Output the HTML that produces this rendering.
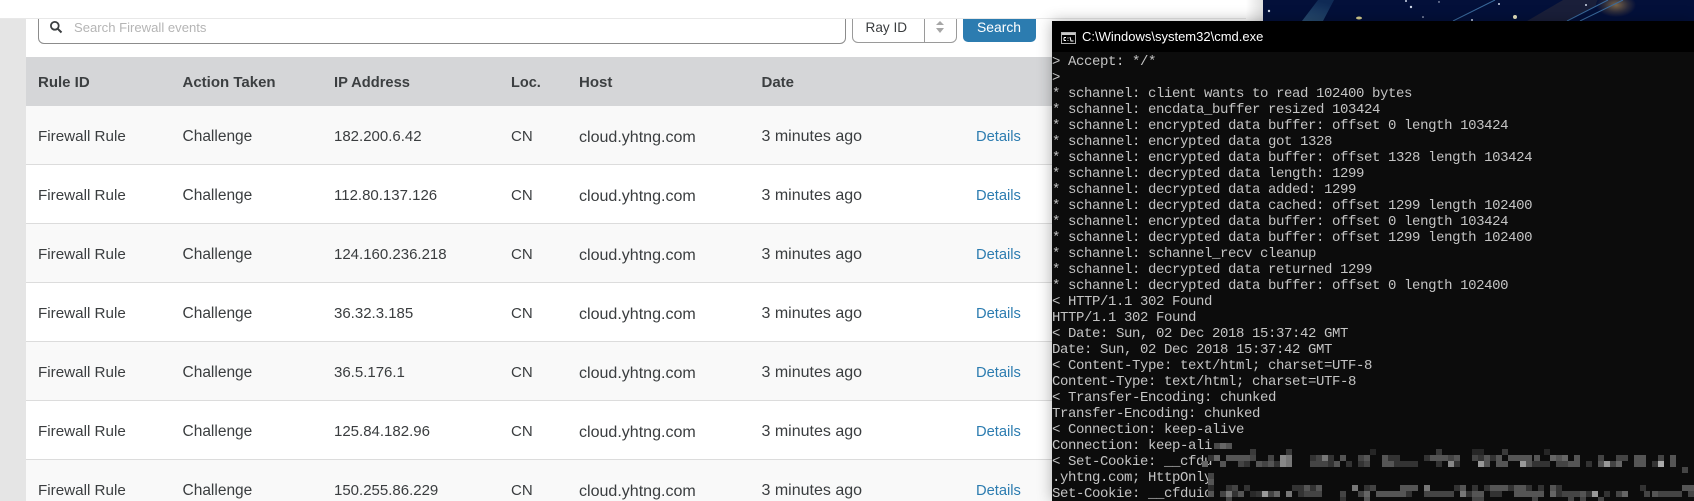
<!DOCTYPE html>
<html><head><meta charset="utf-8"><title>Firewall events</title>
<style>
*{box-sizing:border-box}
html,body{margin:0;padding:0;width:1694px;height:501px;overflow:hidden;background:#fff;font-family:"Liberation Sans",sans-serif;color:#3a3d3f}
#page{position:relative;width:1694px;height:501px;overflow:hidden;background:#fff}
.abs{position:absolute}
#gray{left:0;top:19px;width:26px;height:482px;background:#e5e5e5}
#line{left:0;top:18px;width:1246px;height:1px;background:#e8e8e8}
#fade{left:1246px;top:0;width:17px;height:21px;background:linear-gradient(90deg,#fff,#dedede)}
#sky{left:1263px;top:0}
#clip{left:0;top:19px;width:1060px;height:38px;overflow:hidden}
#inp{left:38px;top:-20px;width:808px;height:45px;border:1px solid #8c8c8c;border-radius:6px;background:#fff}
#sel{left:852px;top:-20px;width:105px;height:44px;border:1px solid #9a9a9a;border-radius:6px;background:#fff}
#div{left:924px;top:0;width:1px;height:24px;background:#9a9a9a}
#btn{left:963px;top:-20px;width:73px;height:43px;background:#2c7cb0;border-radius:5px}
.t{position:absolute;white-space:nowrap;line-height:20px}
#ph{left:74px;top:-1px;font-size:13.1px;color:#b5b5b5;position:absolute;white-space:nowrap;line-height:20px}
#head{left:26px;top:57px;width:1030px;height:49px;background:#d5d6d8}
.h{position:absolute;top:16px;font-size:15px;font-weight:bold;color:#3c3f41;line-height:20px;white-space:nowrap}
.r{position:absolute;left:26px;width:1030px;height:59px;background:#fff;border-bottom:1px solid #dcdcdc}
.r.o{background:#f9f9f9}
.r span{position:absolute;top:21px;line-height:20px;white-space:nowrap}
.a{left:12px;font-size:15.2px}
.b{left:156.500px;font-size:15.5px}
.c{left:308px;font-size:15px}
.d{left:485px;font-size:15px}
.e{left:553px;font-size:16.050px}
.f{left:735.500px;font-size:16px}
.g{left:950px;font-size:14.700px;color:#2c7cb0}
#cmd{left:1052px;top:21px;width:642px;height:480px;background:#0c0c0c;box-shadow:0 0 14px rgba(0,0,0,.3);overflow:hidden}
#bar{left:0;top:0;width:642px;height:31px;background:#000}
#title{left:30px;top:6px;color:#fff;font-size:13px;line-height:20px;white-space:nowrap;position:absolute}
#term{position:absolute;left:0;top:33px;margin:0;font:14px/16px "Liberation Mono",monospace;letter-spacing:-.4px;color:#c4c4c4;white-space:pre}
#px{position:absolute;left:1052px;top:21px}
#px rect{width:6px;height:6px}
</style></head><body><div id="page">
<div class="abs" id="line"></div>
<div class="abs" id="gray"></div>
<div class="abs" id="fade"></div>
<svg class="abs" id="sky" width="431" height="21" viewBox="0 0 431 21">
<defs><linearGradient id="bm" x1="0" y1="1" x2="0.4" y2="0"><stop offset="0" stop-color="#2a4f73"/><stop offset="1" stop-color="#0f2a55"/></linearGradient>
<radialGradient id="gl"><stop offset="0" stop-color="#7a6448"/><stop offset=".6" stop-color="#2c2c3c"/><stop offset="1" stop-color="#04103a"/></radialGradient></defs>
<rect width="431" height="21" fill="#03103a"/>
<path d="M39 21 L55 0 L71 0 L60 21Z" fill="url(#bm)"/>
<path d="M264 21 L300 0 L345 0 L305 21Z" fill="#1a1f3a"/>
<ellipse cx="353" cy="5" rx="20" ry="12" fill="url(#gl)"/>
<path d="M190 21 L232 0M304 21 L345 0M317 21 L360 0" stroke="#3a6a9c" stroke-width="1" fill="none"/>
<g fill="#cfd8e8"><circle cx="6" cy="11" r="1.200"/><circle cx="143" cy="1" r="1"/><circle cx="148" cy="7" r="1.200"/><circle cx="160" cy="17" r=".8"/><circle cx="176" cy="2" r=".7"/><circle cx="236" cy="4" r="1"/><circle cx="209" cy="20" r="1"/><circle cx="323" cy="5" r="1"/></g>
<ellipse cx="96" cy="18" rx="3" ry="1.500" fill="#d8d090"/><circle cx="252" cy="17" r="2" fill="#e8e4c0"/>
</svg>
<div class="abs" id="clip">
 <div class="abs" id="inp"></div>
 <svg class="abs" style="left:49px;top:1px" width="14" height="14" viewBox="0 0 14 14"><circle cx="5.800" cy="5.800" r="3.900" fill="none" stroke="#3c3f41" stroke-width="1.800"/><path d="M8.800 8.800L12.500 12.500" stroke="#3c3f41" stroke-width="2"/></svg>
 <div id="ph">Search Firewall events</div>
 <div class="abs" id="sel"></div>
 <div class="abs" id="div"></div>
 <div class="t" style="left:865.500px;top:-1px;font-size:13.600px">Ray ID</div>
 <svg class="abs" style="left:935px;top:0" width="10" height="16" viewBox="0 0 10 16"><path d="M5 2L9 6H1ZM1 9H9L5 14Z" fill="#a6a6a6"/></svg>
 <div class="abs" id="btn"></div>
 <div class="t" style="left:977px;top:-2px;font-size:13.900px;color:#fff">Search</div>
</div>
<div class="abs" id="head">
 <div class="h" style="left:12px">Rule ID</div>
 <div class="h" style="left:156.500px">Action Taken</div>
 <div class="h" style="left:308px;font-size:14.700px">IP Address</div>
 <div class="h" style="left:485px;font-size:14.500px">Loc.</div>
 <div class="h" style="left:553px">Host</div>
 <div class="h" style="left:735.500px">Date</div>
</div>
<div class="r o" style="top:106px"><span class="a">Firewall Rule</span><span class="b">Challenge</span><span class="c">182.200.6.42</span><span class="d">CN</span><span class="e">cloud.yhtng.com</span><span class="f">3 minutes ago</span><span class="g">Details</span></div>
<div class="r" style="top:165px"><span class="a">Firewall Rule</span><span class="b">Challenge</span><span class="c">112.80.137.126</span><span class="d">CN</span><span class="e">cloud.yhtng.com</span><span class="f">3 minutes ago</span><span class="g">Details</span></div>
<div class="r o" style="top:224px"><span class="a">Firewall Rule</span><span class="b">Challenge</span><span class="c">124.160.236.218</span><span class="d">CN</span><span class="e">cloud.yhtng.com</span><span class="f">3 minutes ago</span><span class="g">Details</span></div>
<div class="r" style="top:283px"><span class="a">Firewall Rule</span><span class="b">Challenge</span><span class="c">36.32.3.185</span><span class="d">CN</span><span class="e">cloud.yhtng.com</span><span class="f">3 minutes ago</span><span class="g">Details</span></div>
<div class="r o" style="top:342px"><span class="a">Firewall Rule</span><span class="b">Challenge</span><span class="c">36.5.176.1</span><span class="d">CN</span><span class="e">cloud.yhtng.com</span><span class="f">3 minutes ago</span><span class="g">Details</span></div>
<div class="r" style="top:401px"><span class="a">Firewall Rule</span><span class="b">Challenge</span><span class="c">125.84.182.96</span><span class="d">CN</span><span class="e">cloud.yhtng.com</span><span class="f">3 minutes ago</span><span class="g">Details</span></div>
<div class="r o" style="top:460px;height:41px;border:0"><span class="a">Firewall Rule</span><span class="b">Challenge</span><span class="c">150.255.86.229</span><span class="d">CN</span><span class="e">cloud.yhtng.com</span><span class="f">3 minutes ago</span><span class="g">Details</span></div>

<div class="abs" id="cmd">
 <div class="abs" id="bar"></div>
 <svg class="abs" style="left:9px;top:11px" width="15" height="12" viewBox="0 0 15 12"><rect x=".5" y=".5" width="14" height="11" fill="#000" stroke="#b0b0b0"/><rect x="1" y="1" width="13" height="2" fill="#c8c8c8"/><path d="M3 5.500H5M3 8.500H5M3 5.500V8.500M7 5.500V6.500M7 8V8.800M9 5L10 9H12.500" stroke="#fff" stroke-width="1" fill="none"/></svg>
 <div id="title">C:\Windows\system32\cmd.exe</div>
<pre id="term">&gt; Accept: */*
&gt;
* schannel: client wants to read 102400 bytes
* schannel: encdata_buffer resized 103424
* schannel: encrypted data buffer: offset 0 length 103424
* schannel: encrypted data got 1328
* schannel: encrypted data buffer: offset 1328 length 103424
* schannel: decrypted data length: 1299
* schannel: decrypted data added: 1299
* schannel: decrypted data cached: offset 1299 length 102400
* schannel: encrypted data buffer: offset 0 length 103424
* schannel: decrypted data buffer: offset 1299 length 102400
* schannel: schannel_recv cleanup
* schannel: decrypted data returned 1299
* schannel: decrypted data buffer: offset 0 length 102400
&lt; HTTP/1.1 302 Found
HTTP/1.1 302 Found
&lt; Date: Sun, 02 Dec 2018 15:37:42 GMT
Date: Sun, 02 Dec 2018 15:37:42 GMT
&lt; Content-Type: text/html; charset=UTF-8
Content-Type: text/html; charset=UTF-8
&lt; Transfer-Encoding: chunked
Transfer-Encoding: chunked
&lt; Connection: keep-alive
Connection: keep-ali
&lt; Set-Cookie: __cfdu
.yhtng.com; HttpOnly
Set-Cookie: __cfduic</pre>
</div>
<svg id="px" width="642" height="480" viewBox="1052 21 642 480">
<g fill="#4a4a4a"><rect x="1214" y="443"/></g><g fill="#666"><rect x="1220" y="443"/></g><g fill="#555"><rect x="1226" y="443"/></g>
<g fill="#3a3a3a"><rect x="1250" y="449"/><rect x="1286" y="449"/><rect x="1436" y="449"/><rect x="1502" y="449"/></g>
<g fill="#262626"><rect x="1370" y="449"/><rect x="1472" y="449"/><rect x="1478" y="449"/><rect x="1544" y="449"/></g>
<g fill="#555">
<rect x="1226" y="455"/><rect x="1232" y="455"/><rect x="1238" y="455"/><rect x="1244" y="455"/><rect x="1340" y="455"/><rect x="1364" y="455"/><rect x="1382" y="455"/><rect x="1430" y="455"/><rect x="1436" y="455"/><rect x="1442" y="455"/><rect x="1454" y="455"/><rect x="1484" y="455"/><rect x="1496" y="455"/><rect x="1508" y="455"/><rect x="1514" y="455"/><rect x="1520" y="455"/><rect x="1526" y="455"/><rect x="1534" y="455"/><rect x="1556" y="455"/><rect x="1574" y="455"/><rect x="1634" y="455"/><rect x="1640" y="455"/><rect x="1670" y="455"/>
<rect x="1220" y="461"/><rect x="1256" y="461"/><rect x="1268" y="461"/><rect x="1334" y="461"/><rect x="1346" y="461"/><rect x="1382" y="461"/><rect x="1388" y="461"/><rect x="1478" y="461"/><rect x="1484" y="461"/><rect x="1496" y="461"/><rect x="1502" y="461"/><rect x="1526" y="461"/><rect x="1544" y="461"/><rect x="1562" y="461"/><rect x="1568" y="461"/><rect x="1574" y="461"/><rect x="1598" y="461"/><rect x="1634" y="461"/><rect x="1640" y="461"/><rect x="1670" y="461"/>
<rect x="1208" y="479"/><rect x="1232" y="485"/><rect x="1304" y="485"/><rect x="1310" y="485"/><rect x="1316" y="485"/><rect x="1400" y="485"/><rect x="1406" y="485"/><rect x="1412" y="485"/><rect x="1460" y="485"/><rect x="1490" y="485"/><rect x="1496" y="485"/><rect x="1502" y="485"/><rect x="1514" y="485"/><rect x="1520" y="485"/><rect x="1550" y="485"/><rect x="1682" y="485"/><rect x="1688" y="485"/><rect x="1460" y="491"/><rect x="1472" y="491"/><rect x="1478" y="491"/><rect x="1514" y="491"/><rect x="1520" y="491"/><rect x="1526" y="491"/><rect x="1532" y="491"/><rect x="1538" y="491"/><rect x="1580" y="491"/><rect x="1208" y="491"/><rect x="1238" y="491"/><rect x="1376" y="491"/><rect x="1382" y="491"/><rect x="1388" y="491"/><rect x="1394" y="491"/><rect x="1400" y="491"/><rect x="1406" y="491"/><rect x="1364" y="497"/>
</g>
<g fill="#444">
<rect x="1202" y="461" fill="#666"/><rect x="1250" y="455"/><rect x="1268" y="455"/><rect x="1316" y="455"/><rect x="1358" y="455"/><rect x="1448" y="455"/><rect x="1472" y="455"/><rect x="1550" y="455"/><rect x="1598" y="455"/><rect x="1616" y="455"/><rect x="1622" y="455"/><rect x="1658" y="455"/>
<rect x="1238" y="461"/><rect x="1262" y="461"/><rect x="1310" y="461"/><rect x="1316" y="461"/><rect x="1322" y="461"/><rect x="1364" y="461"/><rect x="1520" y="461"/><rect x="1556" y="461"/><rect x="1562" y="461"/><rect x="1610" y="461"/><rect x="1208" y="473"/><rect x="1232" y="485"/><rect x="1370" y="485"/>
<rect x="1220" y="491"/><rect x="1262" y="491"/><rect x="1268" y="491"/><rect x="1304" y="491"/><rect x="1310" y="491"/><rect x="1316" y="491"/><rect x="1340" y="491"/><rect x="1358" y="491"/><rect x="1424" y="491"/><rect x="1430" y="491"/><rect x="1436" y="491"/><rect x="1442" y="491"/><rect x="1448" y="491"/><rect x="1562" y="491"/><rect x="1568" y="491"/><rect x="1574" y="491"/><rect x="1590" y="491"/><rect x="1592" y="491"/><rect x="1616" y="491"/><rect x="1644" y="491"/><rect x="1658" y="491"/><rect x="1664" y="491"/><rect x="1670" y="491"/><rect x="1676" y="491"/><rect x="1688" y="491"/><rect x="1226" y="497"/><rect x="1472" y="497"/><rect x="1478" y="497"/><rect x="1532" y="497"/><rect x="1568" y="497"/><rect x="1580" y="497"/><rect x="1598" y="497"/><rect x="1682" y="467"/>
</g>
<g fill="#333"><rect x="1208" y="455"/><rect x="1310" y="455"/><rect x="1328" y="455"/><rect x="1424" y="455"/><rect x="1394" y="455"/><rect x="1478" y="455"/><rect x="1490" y="455"/><rect x="1544" y="461"/><rect x="1394" y="461"/><rect x="1400" y="461"/><rect x="1406" y="461"/><rect x="1412" y="461"/><rect x="1388" y="455"/><rect x="1244" y="461"/><rect x="1274" y="461"/><rect x="1328" y="461"/><rect x="1346" y="461"/><rect x="1400" y="461"/><rect x="1436" y="461"/><rect x="1448" y="461"/><rect x="1454" y="461"/><rect x="1478" y="461"/><rect x="1532" y="461"/><rect x="1538" y="461"/><rect x="1586" y="461"/><rect x="1652" y="461"/><rect x="1244" y="485"/><rect x="1226" y="485"/><rect x="1292" y="485"/><rect x="1298" y="485"/><rect x="1310" y="485"/><rect x="1364" y="485"/><rect x="1454" y="485"/><rect x="1472" y="485"/><rect x="1484" y="485"/><rect x="1508" y="485"/><rect x="1526" y="485"/><rect x="1538" y="485"/><rect x="1556" y="485"/><rect x="1640" y="485"/><rect x="1256" y="491"/><rect x="1232" y="491"/><rect x="1262" y="491"/><rect x="1298" y="491"/><rect x="1406" y="491"/><rect x="1466" y="491"/><rect x="1490" y="491"/><rect x="1496" y="491"/><rect x="1556" y="491"/><rect x="1586" y="491"/><rect x="1604" y="491"/><rect x="1340" y="497"/><rect x="1358" y="461"/></g>
<g fill="#777"><rect x="1208" y="485" fill="#2a2a2a"/><rect x="1286" y="455"/><rect x="1322" y="455"/><rect x="1286" y="461"/><rect x="1352" y="485"/><rect x="1424" y="485"/><rect x="1460" y="491"/><rect x="1226" y="491"/><rect x="1286" y="491"/></g>
<g fill="#888"><rect x="1280" y="455"/><rect x="1280" y="461"/><rect x="1448" y="461"/></g>
<g fill="#999"><rect x="1250" y="491" fill="#2a2a2a"/><rect x="1262" y="491"/><rect x="1478" y="461"/><rect x="1520" y="461"/><rect x="1604" y="461"/><rect x="1592" y="491"/></g>
<g fill="#aaa"><rect x="1658" y="461"/></g>
<g fill="#666"><rect x="1214" y="455"/><rect x="1274" y="491"/><rect x="1364" y="491"/><rect x="1652" y="491" fill="#555"/><rect x="1550" y="455"/><rect x="1562" y="455"/><rect x="1616" y="461"/><rect x="1622" y="491"/><rect x="1550" y="491"/></g>
</svg>
</div></body></html>
